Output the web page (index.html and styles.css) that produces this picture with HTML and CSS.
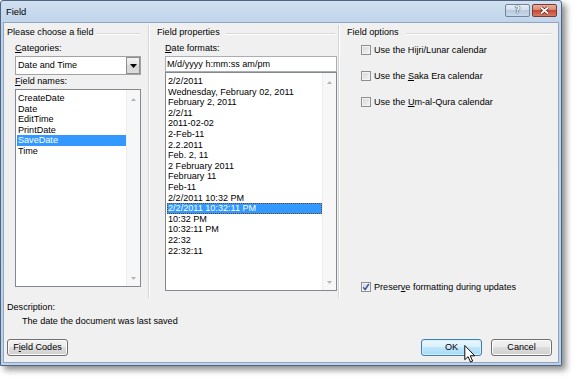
FILE: index.html
```html
<!DOCTYPE html>
<html>
<head>
<meta charset="utf-8">
<link rel="stylesheet" href="styles.css">
</head>
<body>
<div class="screen">
  <div class="window">
    <div class="titlebar">
      <span class="title">Field</span>
      <div class="caption-btns">
        <span class="cbtn help"><span class="qmark">?</span></span>
        <span class="cbtn close">
          <svg width="11" height="9" viewBox="0 0 11 9"><path d="M2 1.5 L9 7.5 M9 1.5 L2 7.5" stroke="#5a2016" stroke-width="3.2" fill="none"/><path d="M2 1.5 L9 7.5 M9 1.5 L2 7.5" stroke="#fff" stroke-width="1.7" fill="none"/></svg>
        </span>
      </div>
    </div>
    <div class="client">
      <div class="groups">
        <section class="col col1">
          <div class="ghead">Please choose a field</div>
          <div class="gbody">
            <div class="lbl"><u>C</u>ategories:</div>
            <div class="combo">
              <span class="combo-text">Date and Time</span>
              <span class="combo-btn"><svg width="7" height="4" viewBox="0 0 7 4"><path d="M0 0 H7 L3.5 4 Z" fill="#000"/></svg></span>
            </div>
            <div class="lbl"><u>F</u>ield names:</div>
            <div class="list list-names">
              <div class="items">
                <div class="row">CreateDate</div>
                <div class="row">Date</div>
                <div class="row">EditTime</div>
                <div class="row">PrintDate</div>
                <div class="row sel">SaveDate</div>
                <div class="row">Time</div>
              </div>
              <div class="vscroll">
                <svg width="5" height="3" viewBox="0 0 5 3"><path d="M0 3 H5 L2.5 0 Z" fill="#b4b4b4"/></svg>
                <svg width="5" height="3" viewBox="0 0 5 3"><path d="M0 0 H5 L2.5 3 Z" fill="#b4b4b4"/></svg>
              </div>
            </div>
          </div>
        </section>
        <section class="col col2">
          <div class="ghead">Field properties</div>
          <div class="gbody">
            <div class="lbl"><u>D</u>ate formats:</div>
            <div class="input">M/d/yyyy h:mm:ss am/pm</div>
            <div class="list list-formats">
              <div class="items">
                <div class="row">2/2/2011</div>
                <div class="row">Wednesday, February 02, 2011</div>
                <div class="row">February 2, 2011</div>
                <div class="row">2/2/11</div>
                <div class="row">2011-02-02</div>
                <div class="row">2-Feb-11</div>
                <div class="row">2.2.2011</div>
                <div class="row">Feb. 2, 11</div>
                <div class="row">2 February 2011</div>
                <div class="row">February 11</div>
                <div class="row">Feb-11</div>
                <div class="row">2/2/2011 10:32 PM</div>
                <div class="row sel focus">2/2/2011 10:32:11 PM</div>
                <div class="row">10:32 PM</div>
                <div class="row">10:32:11 PM</div>
                <div class="row">22:32</div>
                <div class="row">22:32:11</div>
              </div>
              <div class="vscroll">
                <svg width="5" height="3" viewBox="0 0 5 3"><path d="M0 3 H5 L2.5 0 Z" fill="#b4b4b4"/></svg>
                <svg width="5" height="3" viewBox="0 0 5 3"><path d="M0 0 H5 L2.5 3 Z" fill="#b4b4b4"/></svg>
              </div>
            </div>
          </div>
        </section>
        <section class="col col3">
          <div class="ghead">Field options</div>
          <div class="gbody opts">
            <div class="check"><span class="cb"></span><span>Use the Hi<u>j</u>ri/Lunar calendar</span></div>
            <div class="check"><span class="cb"></span><span>Use the <u>S</u>aka Era calendar</span></div>
            <div class="check"><span class="cb"></span><span>Use the <u>U</u>m-al-Qura calendar</span></div>
            <div class="check preserve"><span class="cb checked"><svg width="8" height="8" viewBox="0 0 8 8"><path d="M1.2 4.2 L3.2 6.5 L6.8 1" stroke="#3b53a0" stroke-width="1.4" fill="none"/></svg></span><span>Preser<u>v</u>e formatting during updates</span></div>
          </div>
        </section>
      </div>
      <div class="desc-lbl">Description:</div>
      <div class="desc-text">The date the document was last saved</div>
      <div class="buttons">
        <span class="btn">F<u>i</u>eld Codes</span>
        <span class="spacer"></span>
        <span class="btn default">OK</span>
        <span class="btn">Cancel</span>
      </div>
    </div>
  </div>
  <svg class="cursor" width="12" height="18" viewBox="0 0 12 19"><path d="M0.5 0.5 V15.5 L4 12.3 L6.6 18 L8.8 17 L6.3 11.4 H11 Z" fill="#fff" stroke="#000" stroke-width="1" stroke-linejoin="round"/></svg>
</div>
</body>
</html>
```
FILE: styles.css
```css
* { box-sizing: border-box; }
body {
  margin: 0;
  background: #fff;
  font-family: "Liberation Sans", Arial, sans-serif;
  font-size: 9.1px;
  color: #000;
}
u { text-decoration: underline; text-underline-offset: 1px; }
.screen { width: 575px; height: 381px; position: relative; }
.window {
  width: 562px;
  height: 366px;
  border: 1px solid #4f647e;
  border-radius: 3px 3px 0 0;
  background: linear-gradient(#d2e0f0, #bfd4eb 22px, #bcd2ea);
  box-shadow: 4px 4px 6px rgba(0,0,0,0.45);
  display: flex;
  flex-direction: column;
}
.titlebar {
  height: 21px;
  flex: none;
  display: flex;
  align-items: flex-start;
  padding: 0 4px 0 5px;
}
.title { line-height: 21px; font-size: 9.4px; color: #000; }
.caption-btns { margin-left: auto; margin-top: 3px; display: flex; gap: 2px; }
.cbtn {
  width: 25px;
  height: 13px;
  border: 1px solid #71859f;
  border-radius: 2px;
  display: flex;
  align-items: center;
  justify-content: center;
}
.help { background: linear-gradient(#e6eef7, #d0dcea 50%, #b9cbe0 50%, #c8d8eb); }
.qmark {
  font-family: "DejaVu Sans", sans-serif;
  font-weight: bold;
  font-size: 9px;
  line-height: 11px;
  color: #fff;
  text-shadow: 0 0 1px #34495f, 0 0 1px #34495f, 0 0 1px #34495f;
}
.close { background: linear-gradient(#e9ada0, #d88571 50%, #c7472f 50%, #d57c66); border-color: #7d3b2f; }
.client {
  flex: 1;
  margin: 0 2px 2px 2px;
  border: 1px solid #91a6be;
  background: #f0f0f0;
  display: flex;
  flex-direction: column;
}
.groups {
  margin-top: 2px;
  height: 273px;
  display: grid;
  grid-template-columns: 145px 190px 1fr;
}
.col {
  border-right: 1px solid #d5d5d5;
  box-shadow: 1px 0 0 #fff;
  display: flex;
  flex-direction: column;
}
.col3 { border-right: none; box-shadow: none; }
.ghead {
  display: flex;
  align-items: flex-start;
  margin-top: 1px;
  line-height: 12px;
  white-space: nowrap;
}
.ghead::after {
  content: "";
  flex: 1;
  height: 1px;
  margin-top: 7px;
  margin-left: 3px;
  background: #d8d8d8;
  box-shadow: 0 1px 0 #fff;
}
.col1 .ghead { padding-left: 3px; }
.col1 .ghead::after { margin-right: 8px; }
.col2 .ghead { padding-left: 8px; }
.col2 .ghead::after { margin-right: 3px; margin-left: 6px; }
.col3 .ghead { padding-left: 8px; }
.col3 .ghead::after { margin-right: 6px; margin-left: 7px; }
.gbody { display: flex; flex-direction: column; flex: 1; }
.col1 .gbody { padding: 0 7px 0 11px; }
.col2 .gbody { padding: 0 1px 0 16px; }
.lbl { line-height: 12px; margin-top: 4px; }
.lbl + .combo, .lbl + .input, .lbl + .list { margin-top: 2px; }
.combo + .lbl { margin-top: 0; }
.combo {
  height: 19px;
  border: 1px solid #a3a3a3;
  background: #fff;
  display: flex;
}
.combo-text { flex: 1; padding-left: 2px; line-height: 17px; }
.combo-btn {
  width: 14px;
  border: 1px solid #8e8e8e;
  background: linear-gradient(#f4f4f4, #e2e2e2 50%, #d5d5d5 50%, #dcdcdc);
  display: flex;
  align-items: center;
  justify-content: center;
}
.input {
  height: 16px;
  border: 1px solid #abadb3;
  background: #fff;
  line-height: 14px;
  padding-left: 1px;
}
.list {
  border: 1px solid #828790;
  background: #fff;
  display: flex;
}
.list-names { height: 198px; }
.list-formats { height: 219px; }
.items { flex: 1; padding: 3px 0 0 1px; }
.row { line-height: 10.6px; height: 10.6px; padding-left: 1px; white-space: nowrap; }
.sel { background: #3399ff; color: #fff; }
.focus { outline: 1px dotted #6a4418; outline-offset: -1px; }
.vscroll {
  width: 14px;
  background: #f7f7f7;
  border-left: 1px solid #eeeeee;
  display: flex;
  flex-direction: column;
  align-items: center;
  justify-content: space-between;
  padding: 8px 0 6px;
}
.vscroll svg { display: block; }
.opts { padding-left: 22px; }
.check { display: flex; align-items: center; gap: 3px; line-height: 12px; margin-top: 13.8px; }
.check:first-child { margin-top: 6px; }
.check.preserve { margin-top: auto; margin-bottom: 5px; }
.cb {
  width: 10px;
  height: 10px;
  flex: none;
  border: 1px solid #8e8f8f;
  background: linear-gradient(135deg, #d4d4d4, #f6f6f6);
  box-shadow: inset 0 0 0 1px #f3f3f3;
  display: flex;
  align-items: center;
  justify-content: center;
}
.cb svg { display: block; }
.desc-lbl { margin-top: 3px; padding-left: 3px; line-height: 12px; }
.desc-text { margin-top: 2px; padding-left: 18px; line-height: 12px; }
.buttons { margin-top: 12px; display: flex; gap: 9px; padding: 0 6px 0 3px; }
.spacer { flex: 1; }
.btn {
  width: 61px;
  height: 17px;
  border: 1px solid #707070;
  border-radius: 3px;
  background: linear-gradient(#f2f2f2, #ebebeb 50%, #dddddd 50%, #cfcfcf);
  box-shadow: inset 0 0 0 1px #fbfbfb;
  text-align: center;
  line-height: 15px;
}
.btn.default {
  border-color: #3c7fb1;
  background: linear-gradient(#eaf6fd, #d9f0fc 50%, #bee6fd 50%, #a7d9f5);
  box-shadow: inset 0 0 0 1px #d7eefa;
}
.cursor { position: absolute; left: 464px; top: 345px; }
```
